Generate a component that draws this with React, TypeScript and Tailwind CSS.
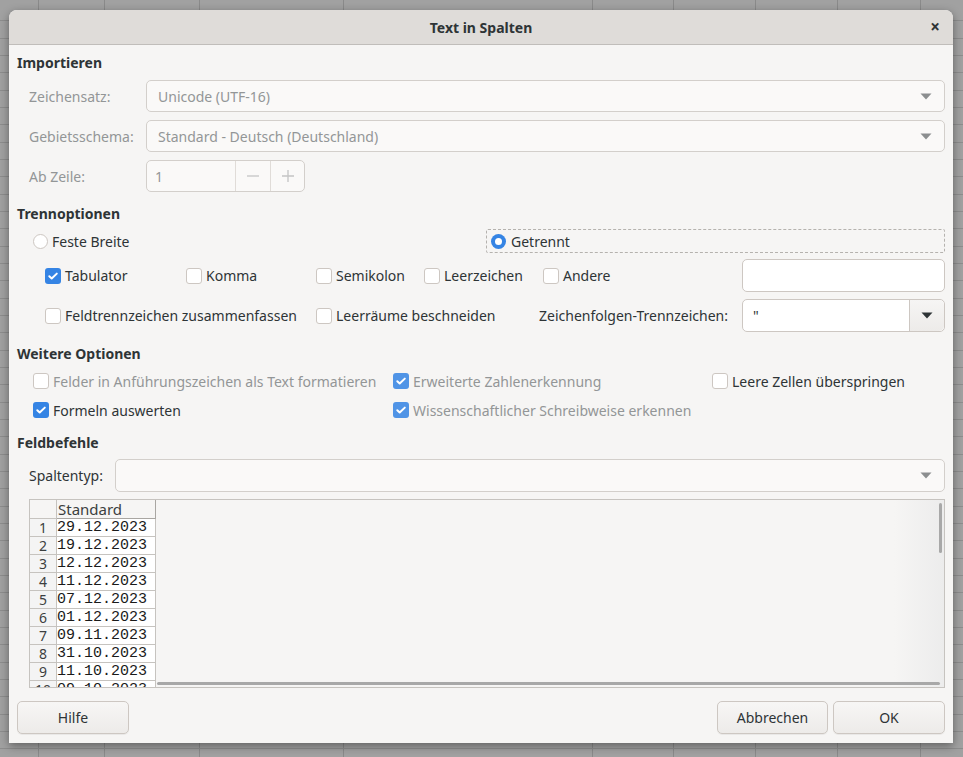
import type { ReactNode } from 'react';

const gridCols = [39, 66, 95, 144, 249, 81, 82, 82, 83, 60];

const dates = [
  '29.12.2023',
  '19.12.2023',
  '12.12.2023',
  '11.12.2023',
  '07.12.2023',
  '01.12.2023',
  '09.11.2023',
  '31.10.2023',
  '11.10.2023',
  '09.10.2023',
];

function Arrow({ dark }: { dark?: boolean }) {
  return (
    <svg width="12" height="7" viewBox="0 0 12 7" className="shrink-0">
      <path d="M0.5 0.5h11L6 6.5z" fill={dark ? '#2e3436' : '#8b8e8f'} />
    </svg>
  );
}

function Checkbox({
  checked,
  disabled,
  children,
  className = '',
}: {
  checked?: boolean;
  disabled?: boolean;
  children: ReactNode;
  className?: string;
}) {
  return (
    <div className={`flex items-center gap-[4px] ${className}`}>
      {checked ? (
        <div
          className={`w-4 h-4 rounded-[3px] flex items-center justify-center shrink-0 ${
            disabled ? 'bg-[#5094e6]' : 'bg-[#3584e4]'
          }`}
        >
          <svg width="12" height="12" viewBox="0 0 12 12">
            <path d="M2.3 6.2l2.4 2.3L9.8 3.6" fill="none" stroke="white" strokeWidth="2" strokeLinecap="round" strokeLinejoin="round" />
          </svg>
        </div>
      ) : (
        <div className="w-4 h-4 rounded-[3px] border border-[#cdc7c2] bg-white shrink-0" />
      )}
      <span className={disabled ? 'text-[#939697]' : 'text-[#2e3436]'}>{children}</span>
    </div>
  );
}

function Heading({ children }: { children: ReactNode }) {
  return <div className="h-5 leading-5 font-bold text-[#2e3436]">{children}</div>;
}

function Select({ text, disabled }: { text?: string; disabled?: boolean }) {
  return (
    <div className="flex-1 h-[32px] rounded-[5px] border border-[#d3cfcb] bg-[#faf9f8] flex items-center justify-between pl-[11px] pr-[12px]">
      <span className={disabled ? 'text-[#939697]' : 'text-[#2e3436]'}>{text}</span>
      <Arrow />
    </div>
  );
}

function Button({ children, className = '' }: { children: ReactNode; className?: string }) {
  return (
    <div
      className={`h-[33px] rounded-[5px] border border-[#cdc7c2] bg-gradient-to-b from-[#f7f6f5] to-[#edebe9] flex items-center justify-center text-[#2e3436] shadow-[0_1px_0_rgba(0,0,0,0.05)] ${className}`}
    >
      {children}
    </div>
  );
}

export default function App() {
  return (
    <div className="relative w-[963px] h-[757px] overflow-hidden bg-[#a1a1a1] font-['Noto_Sans',sans-serif] text-[14px]">
      {/* spreadsheet behind the dialog */}
      <div className="absolute inset-0 flex">
        {gridCols.map((w, i) => (
          <div key={i} style={{ width: w }} className="h-full border-r border-[#8a8a8a] shrink-0" />
        ))}
      </div>
      <div className="absolute left-0 right-0 top-[4px] bottom-0 bg-[repeating-linear-gradient(to_bottom,transparent_0,transparent_16.33px,#8d8d8d_16.33px,#8d8d8d_17.33px)]" />

      <div className="relative ml-[9px] mt-[10px] w-[944px] h-[733px] rounded-t-[8px] bg-[#f6f5f4] shadow-[0_3px_10px_rgba(0,0,0,0.4)] flex flex-col">
        {/* title bar */}
        <div className="h-[35px] shrink-0 rounded-t-[8px] bg-[#dfdcd9] border-b border-[#c0bdba] flex items-center justify-center relative">
          <span className="font-bold text-[#2e3436]">Text in Spalten</span>
          <span className="absolute right-[13px] top-[5px] font-bold text-[17px] leading-[24px] text-[#2e3436]">×</span>
        </div>

        <div className="flex-1 flex flex-col px-[8px] pt-[8px]">
          <Heading>Importieren</Heading>

          <div className="flex flex-col gap-[8px] mt-[7px] pl-[12px]">
            <div className="flex items-center">
              <span className="w-[117px] text-[#939697]">Zeichensatz:</span>
              <Select text="Unicode (UTF-16)" disabled />
            </div>
            <div className="flex items-center">
              <span className="w-[117px] text-[#939697]">Gebietsschema:</span>
              <Select text="Standard - Deutsch (Deutschland)" disabled />
            </div>
            <div className="flex items-center">
              <span className="w-[117px] text-[#939697]">Ab Zeile:</span>
              <div className="w-[159px] h-[32px] rounded-[5px] border border-[#d3cfcb] bg-[#faf9f8] flex">
                <div className="w-[88px] flex items-center pl-[8px] text-[#939697]">1</div>
                <div className="w-[35px] border-l border-[#e0dcd8] flex items-center justify-center">
                  <svg width="14" height="14" viewBox="0 0 14 14">
                    <path d="M1 7h12" stroke="#c4c4c4" strokeWidth="1.3" />
                  </svg>
                </div>
                <div className="w-[34px] border-l border-[#e0dcd8] flex items-center justify-center">
                  <svg width="14" height="14" viewBox="0 0 14 14">
                    <path d="M1 7h12M7 1v12" stroke="#c4c4c4" strokeWidth="1.3" />
                  </svg>
                </div>
              </div>
            </div>
          </div>

          <div className="mt-[12px]">
            <Heading>Trennoptionen</Heading>
          </div>

          <div className="flex items-center h-[24px] mt-[5px] pl-[16px]">
            <div className="w-[453px] flex items-center gap-[4px]">
              <div className="w-[15px] h-[15px] rounded-full border border-[#cdc7c2] bg-white" />
              <span className="text-[#2e3436]">Feste Breite</span>
            </div>
            <div className="flex-1 h-[24px] border border-dashed border-[#b5b2ae] rounded-[2px] flex items-center gap-[5px] pl-[4px]">
              <div className="w-[15px] h-[15px] rounded-full bg-[#3584e4] flex items-center justify-center">
                <div className="w-[7px] h-[7px] rounded-full bg-white" />
              </div>
              <span className="text-[#2e3436]">Getrennt</span>
            </div>
          </div>

          <div className="flex items-center h-[33px] mt-[6px] pl-[28px]">
            <Checkbox checked className="w-[141px]">Tabulator</Checkbox>
            <Checkbox className="w-[130px]">Komma</Checkbox>
            <Checkbox className="w-[108px]">Semikolon</Checkbox>
            <Checkbox className="w-[119px]">Leerzeichen</Checkbox>
            <Checkbox className="w-[199px]">Andere</Checkbox>
            <div className="flex-1 h-[33px] rounded-[5px] border border-[#cdc7c2] bg-white" />
          </div>

          <div className="flex items-center h-[33px] mt-[7px] pl-[28px]">
            <Checkbox className="w-[271px]">Feldtrennzeichen zusammenfassen</Checkbox>
            <Checkbox className="w-[223px]">Leerräume beschneiden</Checkbox>
            <span className="w-[203px] text-[#2e3436]">Zeichenfolgen-Trennzeichen:</span>
            <div className="flex-1 h-[33px] rounded-[5px] border border-[#cdc7c2] bg-white flex">
              <div className="flex-1 flex items-center pl-[10px] text-[#2e3436]">"</div>
              <div className="w-[35px] border-l border-[#cdc7c2] rounded-r-[5px] bg-gradient-to-b from-[#f6f5f4] to-[#edebe9] flex items-center justify-center">
                <Arrow dark />
              </div>
            </div>
          </div>

          <div className="mt-[12px]">
            <Heading>Weitere Optionen</Heading>
          </div>

          <div className="flex items-center h-[24px] mt-[5px] pl-[16px]">
            <Checkbox disabled className="w-[360px]">Felder in Anführungszeichen als Text formatieren</Checkbox>
            <Checkbox checked disabled className="w-[319px]">Erweiterte Zahlenerkennung</Checkbox>
            <Checkbox>Leere Zellen überspringen</Checkbox>
          </div>
          <div className="flex items-center h-[24px] mt-[5px] pl-[16px]">
            <Checkbox checked className="w-[360px]">Formeln auswerten</Checkbox>
            <Checkbox checked disabled>Wissenschaftlicher Schreibweise erkennen</Checkbox>
          </div>

          <div className="mt-[11px]">
            <Heading>Feldbefehle</Heading>
          </div>

          <div className="flex items-center h-[33px] mt-[6px] pl-[12px]">
            <span className="w-[86px] text-[#2e3436]">Spaltentyp:</span>
            <div className="flex-1 h-[33px] rounded-[5px] border border-[#d3cfcb] bg-[#faf9f8] flex items-center justify-end pr-[12px]">
              <Arrow />
            </div>
          </div>

          {/* preview */}
          <div className="ml-[12px] mt-[7px] h-[189px] border border-[#c6c3bf] bg-[#f6f5f4] relative overflow-hidden">
            <div className="flex flex-col">
              <div className="flex h-[19px]">
                <div className="w-[27px] border-r border-b border-[#c6c3bf] bg-[#f6f5f4]" />
                <div className="w-[99px] border-r border-b border-[#a9a6a2] bg-[#f6f5f4] pl-[1px] text-[15px] leading-[18px] text-[#3c3f40]">
                  Standard
                </div>
              </div>
              {dates.map((d, i) => (
                <div key={d} className="flex h-[18px] overflow-hidden">
                  <div className="w-[27px] border-r border-b border-[#c6c3bf] bg-[#f4f4f4] flex items-end justify-center text-[14px] leading-[16px] text-[#3c3f40]">
                    {i + 1}
                  </div>
                  <div className="w-[99px] border-r border-b border-[#c6c3bf] bg-white font-['Liberation_Mono',monospace] text-[15px] leading-[17px] text-[#1a1a1a]">
                    {d}
                  </div>
                </div>
              ))}
            </div>
            <div className="absolute right-0 top-0 bottom-0 w-[50px] bg-gradient-to-r from-transparent to-[#ececec]" />
            <div className="absolute right-[2px] top-[3px] w-[3px] h-[50px] rounded-full bg-[#a8a8a8]" />
            <div className="absolute left-[127px] right-[4px] bottom-[2px] h-[3px] rounded-full bg-[#a8a8a8]" />
          </div>

          <div className="flex mt-[13px] gap-[5px]">
            <Button className="w-[112px]">Hilfe</Button>
            <div className="flex-1" />
            <Button className="w-[111px]">Abbrechen</Button>
            <Button className="w-[112px]">OK</Button>
          </div>
        </div>
      </div>
    </div>
  );
}
